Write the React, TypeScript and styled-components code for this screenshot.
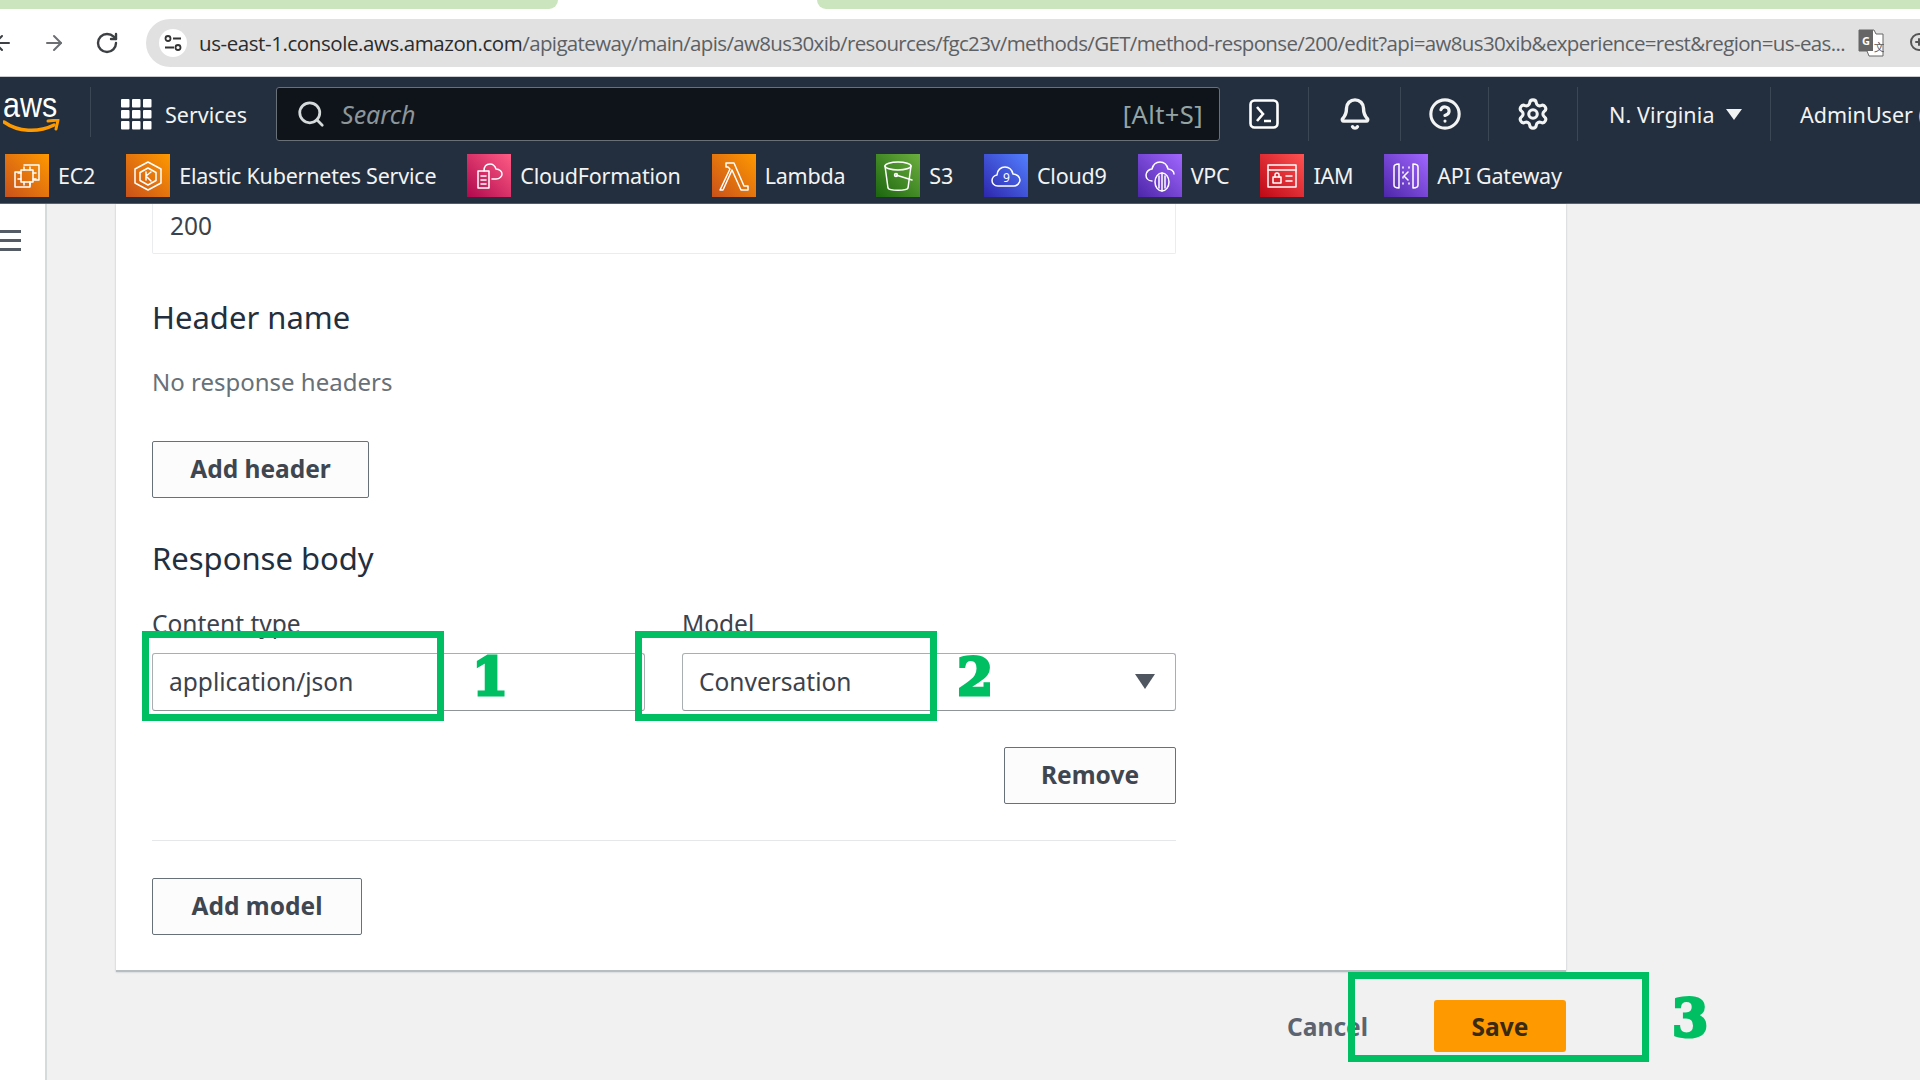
import React from "react";
import styled, { createGlobalStyle } from "styled-components";
import { ArrowLeft, ArrowRight, Bell, CircleHelp, RotateCw, Search, Settings, ZoomIn } from "lucide-react";

const GlobalStyle = createGlobalStyle`
  html, body { margin: 0; padding: 0; background: #fff; }
  * { box-sizing: border-box; }
`;

const Page = styled.div`
  position: relative;
  width: 1920px;
  height: 1080px;
  overflow: hidden;
  display: flex;
  flex-direction: column;
  font-family: "Noto Sans", "Open Sans", sans-serif;
  background: #fff;
`;

const TabStrip = styled.div`
  display: flex;
  height: 9px;
  flex: none;
  justify-content: space-between;
`;

const TabPill = styled.div<{ $width: number; $side: "left" | "right" }>`
  width: ${(p) => p.$width}px;
  background: #cbe5bf;
  ${(p) => (p.$side === "left" ? "border-bottom-right-radius: 12px;" : "border-bottom-left-radius: 12px;")}
`;

const BrowserBar = styled.div`
  flex: none;
  height: 68px;
  display: flex;
  align-items: flex-start;
  padding-top: 10px;
  background: #fff;
  border-bottom: 1px solid #c8ccd0;
  color: #444746;
`;

const NavButton = styled.div<{ $width: number; $muted?: boolean }>`
  flex: none;
  width: ${(p) => p.$width}px;
  height: 48px;
  display: flex;
  align-items: center;
  justify-content: center;
  color: ${(p) => (p.$muted ? "#6b6f72" : "#3c4043")};
`;

const UrlBar = styled.div`
  flex: 1;
  height: 48px;
  margin-left: 20px;
  display: flex;
  align-items: center;
  padding-left: 13px;
  background: #e1e1e1;
  border-radius: 24px 0 0 24px;
  white-space: nowrap;
  overflow: hidden;
`;

const SiteBadge = styled.div`
  flex: none;
  width: 28px;
  height: 28px;
  border-radius: 50%;
  background: #fff;
  display: flex;
  align-items: center;
  justify-content: center;
  margin-right: 12px;
`;

const UrlText = styled.div`
  flex: none;
  width: 1648px;
  font-family: "Open Sans", sans-serif;
  font-size: 20.5px;
  letter-spacing: -0.64px;
  color: #5c6064;
`;

const UrlHost = styled.span`
  color: #2a2c2e;
  letter-spacing: -0.42px;
`;

const UrlIcon = styled.div<{ $gap: number }>`
  flex: none;
  margin-left: ${(p) => p.$gap}px;
  display: flex;
  color: #555;
`;

const TopNav = styled.div`
  flex: none;
  height: 64px;
  display: flex;
  align-items: flex-start;
  padding-top: 10px;
  background: #232f3e;
  color: #f2f3f3;
  white-space: nowrap;
  overflow: hidden;
`;

const Logo = styled.div`
  flex: none;
  width: 91px;
  height: 50px;
  padding: 2px 0 0 3px;
  font-family: "Liberation Sans", sans-serif;
  font-size: 35px;
  line-height: 32px;
  color: #fff;
  border-right: 1px solid #3c4754;
`;

const LogoWord = styled.span`
  display: inline-block;
  transform: scaleX(0.87);
  transform-origin: left center;
`;

const SmileMark = styled.svg`
  display: block;
  width: 58px;
  height: 16px;
  margin-top: -2px;
`;

const ServicesButton = styled.div`
  flex: none;
  width: 185px;
  height: 54px;
  padding-left: 30px;
  display: flex;
  align-items: center;
  gap: 13px;
  font-size: 21.5px;
`;

const SearchBox = styled.div`
  flex: none;
  width: 944px;
  height: 54px;
  display: flex;
  align-items: center;
  padding: 0 16px 0 19px;
  gap: 15px;
  background: #0f141b;
  border: 1.5px solid #687078;
  border-radius: 3px;
  color: #d5dbdb;
`;

const SearchHint = styled.span`
  flex: 1;
  font-size: 25px;
  font-style: italic;
  color: #8d9699;
`;

const SearchKey = styled.span`
  font-size: 25.5px;
  letter-spacing: 0.4px;
  color: #95a5a6;
`;

const NavCell = styled.div<{ $width: number; $divider?: boolean }>`
  flex: none;
  width: ${(p) => p.$width}px;
  height: 54px;
  display: flex;
  align-items: center;
  justify-content: center;
  ${(p) => (p.$divider ? "border-right: 1px solid #3c4754;" : "")}
`;

const TerminalGlyph = styled.svg`
  width: 30px;
  height: 30px;
`;

const RegionLabel = styled.div`
  flex: none;
  width: 193px;
  height: 54px;
  padding-left: 31px;
  display: flex;
  align-items: center;
  gap: 11px;
  font-size: 21.5px;
  letter-spacing: 0.1px;
  border-right: 1px solid #3c4754;
`;

const Caret = styled.span`
  width: 0;
  height: 0;
  border-left: 8px solid transparent;
  border-right: 8px solid transparent;
  border-top: 11px solid #f2f3f3;
`;

const UserLabel = styled.div`
  flex: none;
  height: 54px;
  display: flex;
  align-items: center;
  padding-left: 29px;
  font-size: 21.5px;
`;

const ShortcutBar = styled.div`
  flex: none;
  height: 63px;
  display: flex;
  align-items: flex-start;
  padding: 13px 0 0 5px;
  gap: 31px;
  background: #232f3e;
  border-bottom: 1px solid #59626d;
  color: #f2f3f3;
  white-space: nowrap;
`;

const Shortcut = styled.div`
  display: flex;
  align-items: center;
  gap: 9px;
  font-size: 21.5px;
  letter-spacing: -0.22px;
`;

const Tile = styled.div<{ $from: string; $to: string }>`
  flex: none;
  width: 44px;
  height: 43px;
  display: flex;
  align-items: center;
  justify-content: center;
  background: linear-gradient(45deg, ${(p) => p.$from}, ${(p) => p.$to});
`;

const TileGlyph = styled.svg`
  width: 34px;
  height: 34px;
  fill: none;
  stroke: #fff;
  stroke-width: 1.5;
  stroke-linejoin: round;
  stroke-linecap: round;
`;

const Body = styled.div`
  flex: 1;
  min-height: 0;
  display: flex;
  background: #f1f1f2;
`;

const Sidebar = styled.div`
  flex: none;
  width: 47px;
  background: #fff;
  border-right: 2px solid #d5dbdb;
  padding-top: 26px;
`;

const MenuLine = styled.div`
  width: 21px;
  height: 3px;
  background: #545b64;
  margin-bottom: 6px;
`;

const Main = styled.div`
  flex: none;
  width: 1519px;
  padding-left: 69px;
  display: flex;
  flex-direction: column;
`;

const Card = styled.div`
  flex: none;
  height: 768px;
  padding: 0 390px 0 36px;
  background: #fff;
  border-bottom: 2px solid #b6bec2;
  box-shadow: 0 0 2px rgba(0, 28, 36, 0.25);
`;

const ValueBox = styled.div`
  height: 50px;
  padding-left: 17px;
  font-size: 24.5px;
  line-height: 44px;
  color: #3c424b;
  border: 1px solid #eaeded;
  border-top: none;
  border-radius: 0 0 2px 2px;
`;

const SectionTitle = styled.h2<{ $top: number }>`
  margin: ${(p) => p.$top}px 0 0;
  font-size: 31px;
  line-height: 40px;
  font-weight: 400;
  color: #232f3e;
`;

const Muted = styled.div`
  margin-top: 29px;
  font-size: 24px;
  line-height: 32px;
  color: #687078;
`;

const OutlineButton = styled.div<{ $width: number }>`
  width: ${(p) => p.$width}px;
  height: 57px;
  display: flex;
  align-items: center;
  justify-content: center;
  padding-bottom: 3px;
  font-size: 24.5px;
  font-weight: 700;
  color: #3f4650;
  background: #fcfcfc;
  border: 1.5px solid #687078;
  border-radius: 2px;
`;

const ButtonSlot = styled.div<{ $top: number; $end?: boolean }>`
  margin-top: ${(p) => p.$top}px;
  display: flex;
  justify-content: ${(p) => (p.$end ? "flex-end" : "flex-start")};
`;

const FieldRow = styled.div`
  margin-top: 30px;
  display: grid;
  grid-template-columns: 493px 494px;
  column-gap: 37px;
`;

const FieldLabel = styled.div`
  font-size: 24.5px;
  line-height: 32px;
  color: #3c424b;
  margin-bottom: 13px;
`;

const FieldInput = styled.div`
  height: 58px;
  display: flex;
  align-items: center;
  justify-content: space-between;
  padding: 0 20px 2px 16px;
  font-size: 24.5px;
  color: #3c424b;
  background: #fff;
  border: 1.5px solid #a9aeb2;
  border-bottom-color: #8f9499;
  border-radius: 3px;
`;

const SelectCaret = styled.span`
  width: 0;
  height: 0;
  border-left: 10px solid transparent;
  border-right: 10px solid transparent;
  border-top: 15px solid #4f5660;
`;

const Divider = styled.div`
  margin-top: 36px;
  height: 1px;
  background: #e4e8e8;
`;

const Footer = styled.div`
  display: flex;
  justify-content: flex-end;
  align-items: center;
  margin-top: 28px;
  gap: 66px;
`;

const CancelLabel = styled.div`
  font-size: 24.5px;
  font-weight: 700;
  color: #5c6470;
`;

const SaveButton = styled.div`
  width: 132px;
  height: 52px;
  display: flex;
  align-items: center;
  justify-content: center;
  font-size: 24.5px;
  font-weight: 700;
  color: #3a2a12;
  background: #ff9900;
  border-radius: 3px;
`;

const CalloutBox = styled.div<{ $x: number; $y: number; $w: number; $h: number }>`
  position: absolute;
  left: ${(p) => p.$x}px;
  top: ${(p) => p.$y}px;
  width: ${(p) => p.$w}px;
  height: ${(p) => p.$h}px;
  border: 7px solid #00bf63;
`;

const CalloutNumber = styled.div<{ $x: number; $y: number }>`
  position: absolute;
  left: ${(p) => p.$x}px;
  top: ${(p) => p.$y}px;
  font-family: "DejaVu Serif", serif;
  font-weight: 700;
  font-size: 52px;
  line-height: 60px;
  color: #00bf63;
  -webkit-text-stroke: 3px #00bf63;
`;

const shortcuts = [
  {
    label: "EC2",
    from: "#c8511b",
    to: "#ff9900",
    glyph: (
      <>
        <path d="M14 6h15v15h-5M10 13H5v15h15v-5" />
        <rect x="11" y="11" width="12" height="12" />
        <path d="M14 8v3M20 8v3M14 23v3M20 23v3M8 14h3M8 20h3M23 14h3M23 20h3" />
      </>
    ),
  },
  {
    label: "Elastic Kubernetes Service",
    from: "#c8511b",
    to: "#ff9900",
    glyph: (
      <>
        <path d="M17 3l13 7v14l-13 7-13-7V10z" />
        <path d="M17 9l8 4.5v8L17 26l-8-4.5v-8z" />
        <path d="M15 13v8M15 17l5-4M15 17l5 5" />
      </>
    ),
  },
  {
    label: "CloudFormation",
    from: "#b0084d",
    to: "#ff5c85",
    glyph: (
      <>
        <path d="M6 12h11v17H6zM9 17h5M9 21h5M9 25h5" />
        <path d="M12 12c0-4 2-7 6-7 3 0 5 2 6 5 4 0 6 3 6 5s-2 5-6 5h-4" />
      </>
    ),
  },
  {
    label: "Lambda",
    from: "#c8511b",
    to: "#ff9900",
    glyph: <path d="M9 4h8l10 23h4v4h-7L15 11l-9 20H3l10-21-2-2H9z" />,
  },
  {
    label: "S3",
    from: "#1b660f",
    to: "#6cae3e",
    glyph: (
      <>
        <ellipse cx="17" cy="7" rx="13" ry="4" />
        <path d="M4 7l3 22c1 3 19 3 20 0l3-22" />
        <circle cx="15" cy="16" r="1.5" />
        <path d="M15 16l16 5" />
      </>
    ),
  },
  {
    label: "Cloud9",
    from: "#2e27ad",
    to: "#527fff",
    glyph: (
      <>
        <path d="M9 27c-4 0-6-3-6-5.500s2-5 5-5.500c0-5 4-8 8-8 4 0 7 3 8 7 4 0 7 3 7 6s-3 6-6 6z" />
        <text x="14" y="23" fontSize="12" stroke="none" fill="#fff" fontFamily="Noto Sans">9</text>
      </>
    ),
  },
  {
    label: "VPC",
    from: "#4d27a8",
    to: "#a166ff",
    glyph: (
      <>
        <path d="M9 22c-4 0-6-3-6-6s3-6 6-6c1-4 4-7 8-7s7 3 8 7c3 0 6 2 6 5" />
        <ellipse cx="19" cy="23" rx="7" ry="9" />
        <path d="M19 14v18M16 17v12M22 17v12" />
      </>
    ),
  },
  {
    label: "IAM",
    from: "#bd0816",
    to: "#ff5252",
    glyph: (
      <>
        <rect x="3" y="6" width="28" height="22" />
        <path d="M3 11h28M21 17h6M21 22h6" />
        <rect x="8" y="18" width="8" height="6" />
        <path d="M10 18v-2a2 2 0 0 1 4 0v2" />
      </>
    ),
  },
  {
    label: "API Gateway",
    from: "#4d27a8",
    to: "#a166ff",
    glyph: (
      <>
        <path d="M10 5c-4 0-5 1-5 3v18c0 2 1 3 5 3zM24 5c4 0 5 1 5 3v18c0 2-1 3-5 3z" />
        <path d="M14 8v1M14 13v1M14 18v1M14 24v1M20 8v1M20 24v1M19 13l-4 4 4 4" />
      </>
    ),
  },
];

function AwsLogo() {
  return (
    <Logo>
      <LogoWord>aws</LogoWord>
      <SmileMark viewBox="0 0 58 16" fill="none">
        <path d="M1 3c14 10 34 11 50 3" stroke="#ff9900" strokeWidth="3.5" strokeLinecap="round" />
        <path d="M45 2l10-1-2 9" stroke="#ff9900" strokeWidth="3" strokeLinecap="round" strokeLinejoin="round" />
      </SmileMark>
    </Logo>
  );
}

function GridIcon() {
  const cells = [0, 1, 2].flatMap((row) => [0, 1, 2].map((col) => [row, col]));
  return (
    <svg width="31" height="31" viewBox="0 0 31 31" fill="#fff">
      {cells.map(([row, col]) => (
        <rect key={`${row}-${col}`} x={col * 11} y={row * 11} width="8.500" height="8.500" rx="1" />
      ))}
    </svg>
  );
}

export default function App() {
  return (
    <Page>
      <GlobalStyle />
      <TabStrip>
        <TabPill $width={558} $side="left" />
        <TabPill $width={1103} $side="right" />
      </TabStrip>
      <BrowserBar>
        <NavButton $width={20}>
          <ArrowLeft size={24} style={{ marginLeft: -16 }} />
        </NavButton>
        <NavButton $width={68} $muted>
          <ArrowRight size={24} />
        </NavButton>
        <NavButton $width={38}>
          <RotateCw size={24} strokeWidth={2.4} />
        </NavButton>
        <UrlBar>
          <SiteBadge>
            <svg width="20" height="20" viewBox="0 0 20 20" fill="none" stroke="#333" strokeWidth="1.8">
              <circle cx="5" cy="5.500" r="2.500" />
              <path d="M10 5.500h8M2 14.500h9" />
              <circle cx="15" cy="14.500" r="2.500" />
            </svg>
          </SiteBadge>
          <UrlText>
            <UrlHost>us-east-1.console.aws.amazon.com</UrlHost>
            /apigateway/main/apis/aw8us30xib/resources/fgc23v/methods/GET/method-response/200/edit?api=aw8us30xib&experience=rest&region=us-eas...
          </UrlText>
          <UrlIcon $gap={11}>
            <svg width="26" height="28" viewBox="0 0 26 28">
              <path d="M1 1h15l2 4h7v22H11l-2-5H1z" fill="#fff" stroke="#666" />
              <path d="M1 1h14v21H1z" fill="#666" />
              <text x="4" y="16" fontSize="11" fontWeight="700" fill="#fff" fontFamily="Noto Sans">G</text>
              <text x="16" y="22" fontSize="11" fill="#555" fontFamily="Noto Sans">文</text>
            </svg>
          </UrlIcon>
          <UrlIcon $gap={24}>
            <ZoomIn size={24} />
          </UrlIcon>
        </UrlBar>
      </BrowserBar>
      <TopNav>
        <AwsLogo />
        <ServicesButton>
          <GridIcon />
          Services
        </ServicesButton>
        <SearchBox>
          <Search size={30} strokeWidth={2.2} />
          <SearchHint>Search</SearchHint>
          <SearchKey>[Alt+S]</SearchKey>
        </SearchBox>
        <NavCell $width={89} $divider>
          <TerminalGlyph viewBox="0 0 30 30" fill="none" stroke="#fff" strokeWidth="2.600">
            <rect x="1.500" y="1.500" width="27" height="27" rx="4" />
            <path d="M8 8l6 7-6 7M15 22h7" />
          </TerminalGlyph>
        </NavCell>
        <NavCell $width={92} $divider>
          <Bell size={34} strokeWidth={2.4} />
        </NavCell>
        <NavCell $width={88} $divider>
          <CircleHelp size={34} strokeWidth={2.2} />
        </NavCell>
        <NavCell $width={89} $divider>
          <Settings size={34} strokeWidth={2.2} />
        </NavCell>
        <RegionLabel>
          N. Virginia
          <Caret />
        </RegionLabel>
        <UserLabel>AdminUser (</UserLabel>
      </TopNav>
      <ShortcutBar>
        {shortcuts.map((item) => (
          <Shortcut key={item.label}>
            <Tile $from={item.from} $to={item.to}>
              <TileGlyph viewBox="0 0 34 34">{item.glyph}</TileGlyph>
            </Tile>
            {item.label}
          </Shortcut>
        ))}
      </ShortcutBar>
      <Body>
        <Sidebar>
          <MenuLine />
          <MenuLine />
          <MenuLine />
        </Sidebar>
        <Main>
          <Card>
            <ValueBox>200</ValueBox>
            <SectionTitle $top={43}>Header name</SectionTitle>
            <Muted>No response headers</Muted>
            <ButtonSlot $top={43}>
              <OutlineButton $width={217}>Add header</OutlineButton>
            </ButtonSlot>
            <SectionTitle $top={40}>Response body</SectionTitle>
            <FieldRow>
              <div>
                <FieldLabel>Content type</FieldLabel>
                <FieldInput>application/json</FieldInput>
              </div>
              <div>
                <FieldLabel>Model</FieldLabel>
                <FieldInput>
                  Conversation
                  <SelectCaret />
                </FieldInput>
              </div>
            </FieldRow>
            <ButtonSlot $top={36} $end>
              <OutlineButton $width={172}>Remove</OutlineButton>
            </ButtonSlot>
            <Divider />
            <ButtonSlot $top={37}>
              <OutlineButton $width={210}>Add model</OutlineButton>
            </ButtonSlot>
          </Card>
          <Footer>
            <CancelLabel>Cancel</CancelLabel>
            <SaveButton>Save</SaveButton>
          </Footer>
        </Main>
      </Body>
      <CalloutBox $x={142} $y={631} $w={302} $h={90} />
      <CalloutNumber $x={472} $y={647}>1</CalloutNumber>
      <CalloutBox $x={635} $y={631} $w={302} $h={90} />
      <CalloutNumber $x={957} $y={647}>2</CalloutNumber>
      <CalloutBox $x={1348} $y={972} $w={301} $h={90} />
      <CalloutNumber $x={1672} $y={988}>3</CalloutNumber>
    </Page>
  );
}
